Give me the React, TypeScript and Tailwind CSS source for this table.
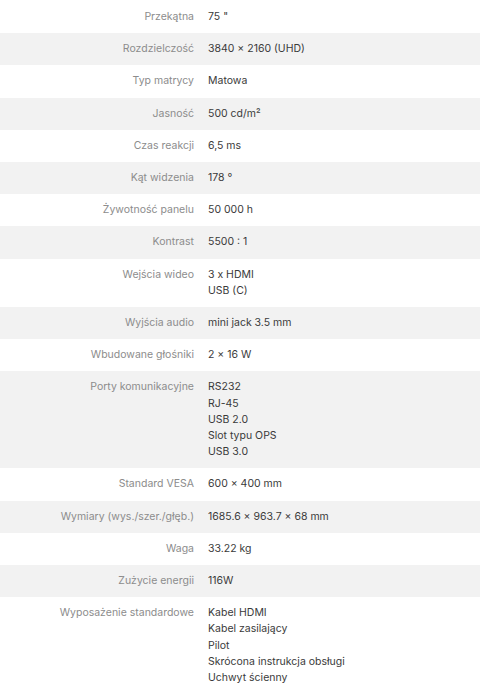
import React from "react";

const rows: [string, string[]][] = [
  ["Przekątna", ['75 "']],
  ["Rozdzielczość", ["3840 × 2160 (UHD)"]],
  ["Typ matrycy", ["Matowa"]],
  ["Jasność", ["500 cd/m²"]],
  ["Czas reakcji", ["6,5 ms"]],
  ["Kąt widzenia", ["178 °"]],
  ["Żywotność panelu", ["50 000 h"]],
  ["Kontrast", ["5500 : 1"]],
  ["Wejścia wideo", ["3 x HDMI", "USB (C)"]],
  ["Wyjścia audio", ["mini jack 3.5 mm"]],
  ["Wbudowane głośniki", ["2 × 16 W"]],
  ["Porty komunikacyjne", ["RS232", "RJ-45", "USB 2.0", "Slot typu OPS", "USB 3.0"]],
  ["Standard VESA", ["600 × 400 mm"]],
  ["Wymiary (wys./szer./głęb.)", ["1685.6 × 963.7 × 68 mm"]],
  ["Waga", ["33.22 kg"]],
  ["Zużycie energii", ["116W"]],
  ["Wyposażenie standardowe", ["Kabel HDMI", "Kabel zasilający", "Pilot", "Skrócona instrukcja obsługi", "Uchwyt ścienny"]],
  ["", [""]],
];

export default function App() {
  return (
    <div
      className="w-[480px] h-[694px] overflow-hidden bg-white text-[10.5px] leading-[16.2px]"
      style={{ fontFamily: "Inter, 'Noto Sans', sans-serif" }}
    >
      <div className="flex flex-col pt-[1px]">
        {rows.map(([label, values], i) => (
          <div
            key={i}
            className={`grid grid-cols-[194px_1fr] gap-x-[14px] py-[8px] ${
              i % 2 === 1 ? "bg-[#f2f2f2]" : "bg-white"
            }`}
          >
            <div className="text-right text-[#8c8c8c]">{label}</div>
            <div className="flex flex-col text-[#3a3a3a]">
              {values.map((v, j) => (
                <div key={j}>{v || "\u00a0"}</div>
              ))}
            </div>
          </div>
        ))}
      </div>
    </div>
  );
}
